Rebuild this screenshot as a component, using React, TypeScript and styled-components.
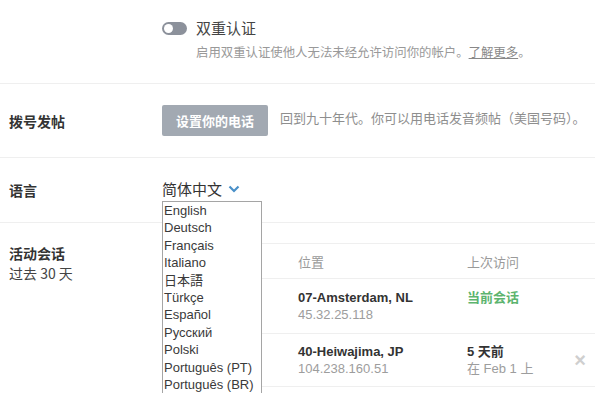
import React from 'react'
import styled, { createGlobalStyle } from 'styled-components'

const Global = createGlobalStyle`
  html, body {
    margin: 0;
    padding: 0;
    background: #fff;
  }
  body {
    font-family: "Liberation Sans", "Noto Sans CJK SC", Arial, sans-serif;
    color: #333;
  }
`

const Page = styled.div`
  width: 595px;
  overflow: hidden;
  height: 394px;
`

const Section = styled.div<{ $h?: number; $align?: string; $last?: boolean }>`
  display: flex;
  align-items: ${(p) => p.$align || 'flex-start'};
  height: ${(p) => (p.$h ? `${p.$h}px` : 'auto')};
  border-bottom: ${(p) => (p.$last ? 'none' : '1px solid #efefef')};
  box-sizing: border-box;
`

const Label = styled.div<{ $top?: number }>`
  width: 162px;
  flex-shrink: 0;
  box-sizing: border-box;
  padding-left: 9px;
  padding-top: ${(p) => p.$top || 0}px;
  font-family: "Noto Sans CJK SC", sans-serif;
  font-size: 14px;
  font-weight: 700;
  line-height: 20px;
  color: #333;
`

const SubLabel = styled.div`
  font-weight: 400;
  color: #444;
`

const Content = styled.div<{ $top?: number }>`
  flex: 1;
  padding-top: ${(p) => p.$top || 0}px;
`

const ToggleLine = styled.div`
  display: flex;
  align-items: center;
  gap: 9px;
`

const Toggle = styled.span`
  position: relative;
  width: 25px;
  height: 13px;
  border-radius: 7px;
  background: #8c919b;
  display: inline-block;
  &::after {
    content: '';
    position: absolute;
    left: 2px;
    top: 2px;
    width: 9px;
    height: 9px;
    border-radius: 50%;
    background: #fff;
  }
`

const ToggleTitle = styled.span`
  font-family: "Noto Sans CJK SC", sans-serif;
  font-size: 15px;
  line-height: 20px;
  color: #444;
`

const Hint = styled.p<{ $indent?: number }>`
  margin: ${(p) => (p.$indent ? `5px 0 0 ${p.$indent}px` : '0')};
  font-family: "Noto Sans CJK SC", sans-serif;
  font-size: 12.4px;
  line-height: 18px;
  color: #999;
  a {
    color: #888;
    text-decoration: underline;
  }
`

const Inline = styled.div`
  display: flex;
  align-items: center;
  gap: 12px;
`

const GrayButton = styled.button`
  width: 106px;
  height: 31px;
  border: none;
  border-radius: 2px;
  background: #a2a9b2;
  color: #fff;
  font-family: "Noto Sans CJK SC", sans-serif;
  font-size: 13px;
  font-weight: 700;
  padding: 0;
`

const PhoneHint = styled(Hint)`
  font-size: 13px;
  color: #8e8e8e;
  margin-top: -6px;
  white-space: nowrap;
`

const SelectWrap = styled.div`
  position: relative;
  display: inline-block;
`

const SelectValue = styled.div`
  display: flex;
  align-items: center;
  gap: 6px;
  font-family: "Noto Sans CJK SC", sans-serif;
  font-size: 15px;
  line-height: 20px;
  color: #333;
  margin-top: -4px;
`

const OptionList = styled.ul`
  position: absolute;
  left: 0;
  top: calc(100% + 2px);
  z-index: 5;
  width: 100px;
  margin: 0;
  padding: 0 0 0 1px;
  box-sizing: border-box;
  list-style: none;
  background: #fff;
  border: 1px solid #a5a5a5;
  border-bottom: none;
`

const OptionItem = styled.li`
  font-family: "Liberation Sans", "Noto Sans CJK JP", sans-serif;
  font-size: 13px;
  line-height: 17.4px;
  color: #3a3a3a;
  white-space: nowrap;
`

const Table = styled.div`
  margin-top: 20px;
  width: 100%;
`

const TRow = styled.div<{ $h: number }>`
  display: grid;
  grid-template-columns: 136px 169px 1fr 30px;
  align-items: center;
  height: ${(p) => p.$h}px;
  border-top: 1px solid #efefef;
  box-sizing: border-box;
`

const Head = styled.div`
  font-family: "Noto Sans CJK SC", sans-serif;
  font-size: 13px;
  color: #9a9a9a;
`

const Main = styled.div<{ $green?: boolean }>`
  font-family: "Liberation Sans", "Noto Sans CJK SC", sans-serif;
  font-size: 13px;
  font-weight: 700;
  line-height: 17px;
  color: ${(p) => (p.$green ? '#5cb46e' : '#333')};
`

const Sub = styled.div`
  font-family: "Liberation Sans", "Noto Sans CJK SC", sans-serif;
  font-size: 13px;
  line-height: 17px;
  color: #9d9d9d;
`

const Close = styled.span`
  justify-self: center;
  font-family: "Liberation Sans", sans-serif;
  font-size: 20px;
  font-weight: 700;
  color: #cfcfcf;
  line-height: 1;
`

const languages = [
  'English',
  'Deutsch',
  'Français',
  'Italiano',
  '日本語',
  'Türkçe',
  'Español',
  'Русский',
  'Polski',
  'Português (PT)',
  'Português (BR)',
]

const Chevron = () => (
  <svg width='12' height='8' viewBox='0 0 12 8'>
    <path d='M1.5 1.5 L6 6 L10.5 1.5' fill='none' stroke='#4a90c8' strokeWidth='2.2' />
  </svg>
)

const App = () => {
  return (
    <Page>
      <Global />
      <Section $h={84}>
        <Label />
        <Content $top={18}>
          <ToggleLine>
            <Toggle />
            <ToggleTitle>双重认证</ToggleTitle>
          </ToggleLine>
          <Hint $indent={34}>
            启用双重认证使他人无法未经允许访问你的帐户。<a>了解更多</a>。
          </Hint>
        </Content>
      </Section>
      <Section $h={74} $align='center'>
        <Label>拨号发帖</Label>
        <Content>
          <Inline>
            <GrayButton>设置你的电话</GrayButton>
            <PhoneHint>回到九十年代。你可以用电话发音频帖（美国号码）。</PhoneHint>
          </Inline>
        </Content>
      </Section>
      <Section $h={65} $align='center'>
        <Label>语言</Label>
        <Content>
          <SelectWrap>
            <SelectValue>
              简体中文 <Chevron />
            </SelectValue>
            <OptionList>
              {languages.map((l) => (
                <OptionItem key={l}>{l}</OptionItem>
              ))}
            </OptionList>
          </SelectWrap>
        </Content>
      </Section>
      <Section $last>
        <Label $top={20}>
          活动会话
          <SubLabel>过去 30 天</SubLabel>
        </Label>
        <Content>
          <Table>
            <TRow $h={35}>
              <span />
              <Head>位置</Head>
              <Head>上次访问</Head>
              <span />
            </TRow>
            <TRow $h={55}>
              <span />
              <div>
                <Main>07-Amsterdam, NL</Main>
                <Sub>45.32.25.118</Sub>
              </div>
              <div>
                <Main $green>当前会话</Main>
                <Sub>&nbsp;</Sub>
              </div>
              <span />
            </TRow>
            <TRow $h={53}>
              <span />
              <div>
                <Main>40-Heiwajima, JP</Main>
                <Sub>104.238.160.51</Sub>
              </div>
              <div>
                <Main>5 天前</Main>
                <Sub>在 Feb 1 上</Sub>
              </div>
              <Close>×</Close>
            </TRow>
            <TRow $h={20} />
          </Table>
        </Content>
      </Section>
    </Page>
  )
}

export default App
